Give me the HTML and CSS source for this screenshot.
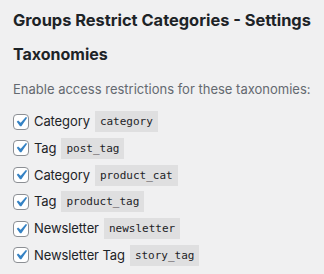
FILE: index.html
```html
<html>
  <head>
    <link rel="stylesheet" href="styles.css">
  </head>
  <body>
    <div class="wrap">
      <h1 class="page-title">Groups Restrict Categories - Settings</h1>
      <h2 class="section-title">Taxonomies</h2>
      <p class="description">Enable access restrictions for these taxonomies:</p>
      <ul class="tax-list">
        <li><label class="tax-item"><span class="check"><svg viewBox="0 0 20 20"><path d="M14.83 4.89l1.34.94-5.81 8.38H9.02L5.78 9.67l1.34-1.25 2.57 2.4z"/></svg></span>Category <code>category</code></label></li>
        <li><label class="tax-item"><span class="check"><svg viewBox="0 0 20 20"><path d="M14.83 4.89l1.34.94-5.81 8.38H9.02L5.78 9.67l1.34-1.25 2.57 2.4z"/></svg></span>Tag <code>post_tag</code></label></li>
        <li><label class="tax-item"><span class="check"><svg viewBox="0 0 20 20"><path d="M14.83 4.89l1.34.94-5.81 8.38H9.02L5.78 9.67l1.34-1.25 2.57 2.4z"/></svg></span>Category <code>product_cat</code></label></li>
        <li><label class="tax-item"><span class="check"><svg viewBox="0 0 20 20"><path d="M14.83 4.89l1.34.94-5.81 8.38H9.02L5.78 9.67l1.34-1.25 2.57 2.4z"/></svg></span>Tag <code>product_tag</code></label></li>
        <li><label class="tax-item"><span class="check"><svg viewBox="0 0 20 20"><path d="M14.83 4.89l1.34.94-5.81 8.38H9.02L5.78 9.67l1.34-1.25 2.57 2.4z"/></svg></span>Newsletter <code>newsletter</code></label></li>
        <li><label class="tax-item"><span class="check"><svg viewBox="0 0 20 20"><path d="M14.83 4.89l1.34.94-5.81 8.38H9.02L5.78 9.67l1.34-1.25 2.57 2.4z"/></svg></span>Newsletter Tag <code>story_tag</code></label></li>
      </ul>
    </div>
  </body>
</html>
```

FILE: styles.css
```css
body {
  background-color: #f0f0f1;
  color: #1d2327;
  font-family: Inter, "Noto Sans", sans-serif;
  margin: 0;
}

.wrap {
  padding: 10px 13px;
}

.page-title {
  font-size: 16.4px;
  font-weight: 700;
  line-height: 20px;
  margin: 0;
}

.section-title {
  font-size: 16px;
  font-weight: 700;
  line-height: 20px;
  margin: 14px 0 0;
}

.description {
  color: #646970;
  font-size: 13px;
  line-height: 18px;
  margin: 16px 0 0;
}

.tax-list {
  list-style: none;
  margin: 13px 0 0;
  padding: 0;
  display: flex;
  flex-direction: column;
  gap: 5.8px;
}

.tax-item {
  display: flex;
  align-items: center;
  font-size: 13px;
  line-height: 21px;
  letter-spacing: -0.1px;
}

.check {
  width: 14px;
  height: 14px;
  border: 1px solid #8c8f94;
  border-radius: 4px;
  background: #fff;
  margin-right: 5px;
  display: flex;
  align-items: center;
  justify-content: center;
}

.check svg {
  width: 20px;
  height: 20px;
  flex: none;
  fill: #3582c4;
}

code {
  font-family: "DejaVu Sans Mono", monospace;
  font-size: 11px;
  line-height: 21px;
  letter-spacing: 0;
  background: rgba(0, 0, 0, 0.07);
  padding: 0 5px;
  margin-left: 5px;
}
```
